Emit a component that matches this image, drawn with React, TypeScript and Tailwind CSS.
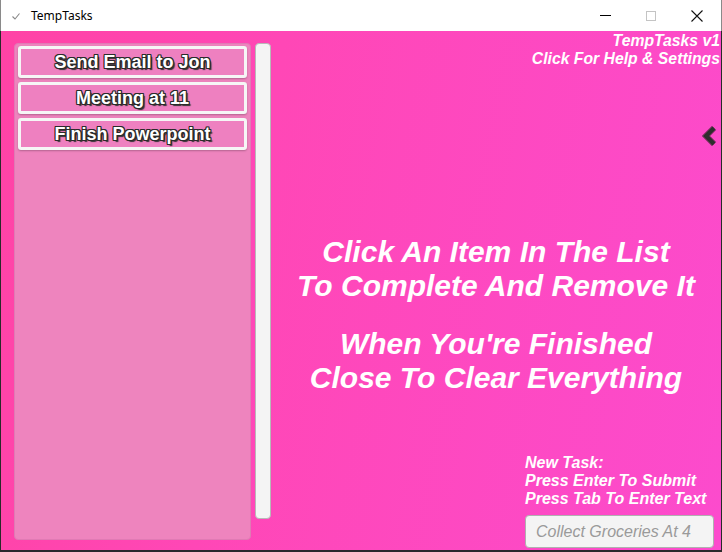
import React from "react";

const outline =
  "[text-shadow:1px_0_0_#2b2b2b,-1px_0_0_#2b2b2b,0_1px_0_#2b2b2b,0_-1px_0_#2b2b2b,1px_1px_0_#2b2b2b,-1px_-1px_0_#2b2b2b,1px_-1px_0_#2b2b2b,-1px_1px_0_#2b2b2b,2px_2px_1px_#333]";

function Item({ label }: { label: string }) {
  return (
    <div className="h-[32px] mx-[3px] border-[3px] border-[#f6f6f6] rounded-[3px] bg-[#ee80c0] flex items-center justify-center shadow-[0_1px_2px_rgba(0,0,0,0.25)]">
      <span
        className={`text-white font-bold text-[18px] leading-none ${outline}`}
        style={{ fontFamily: '"Liberation Sans", Arial, sans-serif' }}
      >
        {label}
      </span>
    </div>
  );
}

export default function App() {
  return (
    <div
      className="w-[722px] h-[552px] flex flex-col bg-[#2a2a2a] overflow-hidden"
      style={{ fontFamily: '"Liberation Sans", Arial, sans-serif' }}
    >
      {/* Title bar */}
      <div className="h-[31px] bg-white flex items-center border-l border-r border-[#8a8a8a] shrink-0">
        <svg width="10" height="10" viewBox="0 0 10 10" className="ml-[10px]">
          <path d="M1.5 5.5 L4 8 L8.5 2.5" stroke="#888" strokeWidth="1.1" fill="none" />
        </svg>
        <span
          className="ml-[10px] text-[12px] text-black"
          style={{ fontFamily: '"Noto Sans", "Liberation Sans", sans-serif' }}
        >
          TempTasks
        </span>
        <div className="flex-1" />
        <div className="w-[46px] h-[31px] flex items-center justify-center">
          <div className="w-[11px] h-px bg-black" />
        </div>
        <div className="w-[46px] h-[31px] flex items-center justify-center">
          <div className="w-[10px] h-[10px] border border-[#c4c4c4]" />
        </div>
        <div className="w-[46px] h-[31px] flex items-center justify-center mr-[1px]">
          <svg width="12" height="12" viewBox="0 0 12 12">
            <path d="M0.5 0.5 L11.5 11.5 M11.5 0.5 L0.5 11.5" stroke="#111" strokeWidth="1.1" />
          </svg>
        </div>
      </div>

      {/* Content */}
      <div className="flex-1 ml-px mr-px mb-[2px] flex bg-[linear-gradient(100deg,#ff43a5_0%,#ff47b6_35%,#fc4bcd_100%)]">
        {/* Left list */}
        <div className="w-[237px] ml-[13px] mt-[12px] mb-[10px] rounded-[4px] bg-[#ee84be] border border-[#e07ab4] flex flex-col gap-[4px] pt-[2px]">
          <Item label="Send Email to Jon" />
          <Item label="Meeting at 11" />
          <Item label="Finish Powerpoint" />
        </div>
        {/* Scrollbar */}
        <div className="w-[16px] ml-[4px] mt-[12px] mb-[31px] rounded-[4px] bg-[#f4f4f4] border border-[#b8b8b8]" />

        {/* Right area */}
        <div className="flex-1 flex flex-col text-white italic font-bold">
          <div className="flex flex-col items-end pr-[1px] pt-[1px] text-[15.75px] leading-[18px]">
            <span>TempTasks v1</span>
            <span>Click For Help &amp; Settings</span>
          </div>
          <div className="flex justify-end mt-[58px] pr-[3px]">
            <svg width="16" height="20" viewBox="0 0 16 20">
              <path d="M12 2 L4 10 L12 18" stroke="#7a3060" strokeWidth="6" fill="none" strokeLinejoin="miter" />
              <path d="M12 2 L4 10 L12 18" stroke="#2e2e2e" strokeWidth="4" fill="none" strokeLinejoin="miter" />
            </svg>
          </div>
          <div className="flex flex-col items-center mt-[89px] text-[30px] leading-[34px]">
            <span>Click An Item In The List</span>
            <span>To Complete And Remove It</span>
            <span className="mt-[24px]">When You're Finished</span>
            <span>Close To Clear Everything</span>
          </div>
          <div className="flex-1" />
          <div className="flex flex-col pl-[254px] text-[16px] leading-[18px]">
            <span>New Task:</span>
            <span>Press Enter To Submit</span>
            <span>Press Tab To Enter Text</span>
          </div>
          <div className="pl-[254px] mt-[7px] mb-[2px]">
            <input
              readOnly
              placeholder="Collect Groceries At 4"
              className="w-[189px] h-[33px] rounded-[4px] bg-[#f4f4f4] border border-[#b0b0b0] px-[10px] text-[16px] italic font-normal placeholder:text-[#9a9a9a] outline-none"
              style={{ fontFamily: '"Liberation Sans", Arial, sans-serif' }}
            />
          </div>
        </div>
      </div>
    </div>
  );
}
